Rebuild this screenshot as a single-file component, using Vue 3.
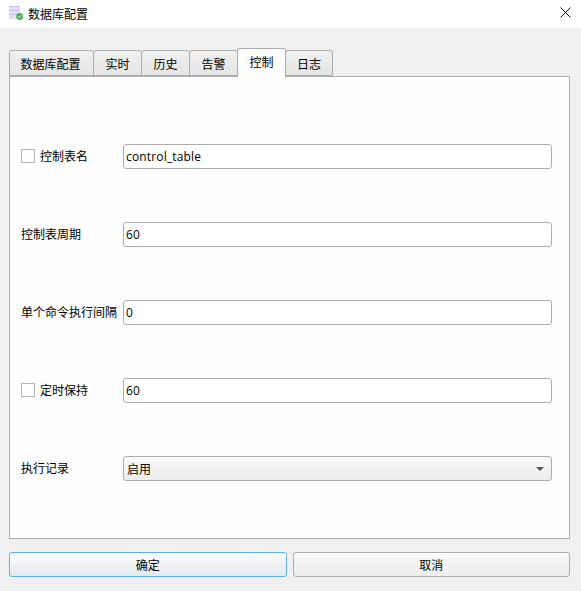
<script setup>
import { ref } from 'vue';

const tabs = ['数据库配置', '实时', '历史', '告警', '控制', '日志'];
const activeTab = ref(4);

const rows = [
  { label: '控制表名', value: 'control_table', check: true },
  { label: '控制表周期', value: '60' },
  { label: '单个命令执行间隔', value: '0' },
  { label: '定时保持', value: '60', check: true },
];
</script>

<template>
  <div class="dialog">
    <div class="titlebar">
      <svg class="app-icon" width="16" height="16" viewBox="0 0 16 16">
        <rect x="0" y="0" width="11" height="13" fill="#e2dcf6" />
        <rect x="0" y="0" width="11" height="1" fill="#c9c0e8" />
        <rect x="0" y="4" width="11" height="1" fill="#c9c0e8" />
        <rect x="0" y="8" width="11" height="1" fill="#c9c0e8" />
        <circle cx="10.7" cy="10.5" r="3.4" fill="#4caf50" />
        <path d="M9 10.5l1.2 1.2 2.2-2.4" fill="none" stroke="#fff" stroke-width="1" />
      </svg>
      <span class="title">数据库配置</span>
      <svg class="close" width="11" height="11" viewBox="0 0 11 11">
        <path d="M0.5 0.5l10 10M10.5 0.5l-10 10" stroke="#111" stroke-width="1" fill="none" />
      </svg>
    </div>

    <div class="body">
      <div class="tabbar">
        <div
          v-for="(tab, index) in tabs"
          :key="tab"
          class="tab"
          :class="{ active: index == activeTab, wide: index == 0 }"
          @click="activeTab = index"
        >{{ tab }}</div>
      </div>

      <div class="pane">
        <div class="row" v-for="row in rows" :key="row.label">
          <div class="label">
            <span v-if="row.check" class="checkbox"></span>
            <span>{{ row.label }}</span>
          </div>
          <input class="field" :value="row.value" />
        </div>
        <div class="row">
          <div class="label">执行记录</div>
          <div class="field combo">
            <span>启用</span>
            <span class="arrow"></span>
          </div>
        </div>
      </div>

      <div class="buttons">
        <div class="btn primary">确定</div>
        <div class="btn">取消</div>
      </div>
    </div>
  </div>
</template>

<style scoped>
.dialog {
  width: 581px;
  height: 591px;
  display: flex;
  flex-direction: column;
  font-family: "Noto Sans CJK SC", "Noto Sans", sans-serif;
  font-size: 12px;
  color: #000;
  background: #f0f0f0;
  overflow: hidden;
}

.titlebar {
  height: 28px;
  background: #fff;
  display: flex;
  align-items: center;
  padding: 0 9px 0 9px;
  flex-shrink: 0;
}

.app-icon {
  margin-right: 3px;
}

.title {
  flex: 1;
  padding-bottom: 2px;
}

.close {
  margin-right: 1px;
  margin-top: -4px;
}

.body {
  flex: 1;
  padding: 20px 11px 0 9px;
  display: flex;
  flex-direction: column;
}

.tabbar {
  display: flex;
  align-items: flex-end;
  height: 28px;
  position: relative;
  z-index: 1;
}

.tab {
  width: 49px;
  height: 26px;
  margin-right: -1px;
  box-sizing: border-box;
  border: 1px solid #adadad;
  border-radius: 3px 3px 0 0;
  background: linear-gradient(#f0f0f0, #e5e5e5);
  display: flex;
  align-items: center;
  justify-content: center;
}

.tab.wide {
  width: 85px;
  padding-right: 2px;
}

.tab:last-child {
  width: 48px;
}

.tab.active {
  height: 29px;
  margin-bottom: -1px;
  background: #fdfdfd;
  border-bottom: none;
  padding-bottom: 3px;
}

.pane {
  height: 463px;
  box-sizing: border-box;
  border: 1px solid #adadad;
  background: #fdfdfd;
  padding: 67px 17px 0 11px;
  display: flex;
  flex-direction: column;
  gap: 53px;
}

.row {
  display: flex;
  align-items: center;
  height: 25px;
}

.label {
  width: 102px;
  flex-shrink: 0;
  display: flex;
  align-items: center;
  white-space: nowrap;
  padding-bottom: 2px;
}

.checkbox {
  width: 12px;
  height: 12px;
  border: 1px solid #b5b5b5;
  background: #fff;
  margin-right: 5px;
  flex-shrink: 0;
}

.field {
  flex: 1;
  min-width: 0;
  height: 25px;
  box-sizing: border-box;
  border: 1px solid #adadad;
  border-radius: 3px;
  background: #fff;
  padding: 0 2px;
  font: inherit;
  font-family: "Open Sans", "Noto Sans CJK SC", sans-serif;
  letter-spacing: 0.16px;
  color: #000;
  outline: none;
}

.combo {
  display: flex;
  align-items: center;
  justify-content: space-between;
  padding: 0 7px 0 3px;
  background: linear-gradient(#fbfbfb, #ececec);
  font-family: "Noto Sans CJK SC", sans-serif;
  letter-spacing: 0;
}

.arrow {
  width: 0;
  height: 0;
  border-left: 4px solid transparent;
  border-right: 4px solid transparent;
  border-top: 4px solid #555;
}

.buttons {
  display: flex;
  gap: 6px;
  margin-top: 13px;
}

.btn {
  flex: 1;
  height: 25px;
  box-sizing: border-box;
  border: 1px solid #adadad;
  border-radius: 3px;
  background: linear-gradient(#fbfbfb, #ececec);
  display: flex;
  align-items: center;
  justify-content: center;
}

.btn.primary {
  border-color: #5cb0f0;
  background: linear-gradient(#fafbfc, #e6e9ed);
}
</style>
